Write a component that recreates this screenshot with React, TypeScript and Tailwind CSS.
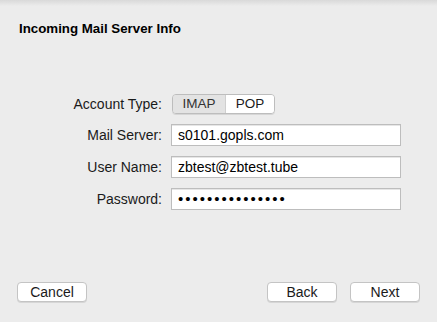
import React from "react";

const font = { fontFamily: '"Liberation Sans", Arial, sans-serif' };

function Field({ label, value, password }: { label: string; value: string; password?: boolean }) {
  return (
    <div className="flex items-center h-[22px]">
      <div className="w-[171px] pr-[9px] text-right text-[14px] text-[#1a1a1a]">{label}</div>
      <div className="w-[230px] h-[22px] bg-white border border-[#bdbdbd] shadow-[inset_0_1px_0_#e6e6e6] flex items-center pl-[6px] text-[14px] text-black">
        {password ? <span className="tracking-[2px] text-[15px]">{value}</span> : value}
      </div>
    </div>
  );
}

function Btn({ children }: { children: React.ReactNode }) {
  return (
    <div className="w-[70px] h-[20px] bg-white border border-[#c4c4c4] rounded-[4px] shadow-[0_1px_0_#d6d6d6] flex items-center justify-center text-[14px] text-[#1a1a1a]">
      {children}
    </div>
  );
}

export default function App() {
  return (
    <div style={font} className="w-[437px] h-[322px] bg-[#ececec] relative flex flex-col">
      <div className="absolute top-0 left-0 right-0 h-[6px] bg-gradient-to-b from-[#d9d9d9] to-[#ececec]" />
      <div className="pt-[21px] pl-[19px] text-[13.3px] font-bold text-black leading-[16px]">Incoming Mail Server Info</div>
      <div className="mt-[57px] flex flex-col gap-[10px]">
        <div className="flex items-center h-[20px]">
          <div className="w-[171px] pr-[9px] text-right text-[14px] text-[#1a1a1a]">Account Type:</div>
          <div className="ml-[1px] flex h-[20px] border border-[#bdbdbd] rounded-[4px] overflow-hidden text-[13.5px] text-[#1a1a1a] shadow-[0_1px_0_#d6d6d6]">
            <div className="w-[53px] bg-[#e3e3e3] flex items-center justify-center border-r border-[#cfcfcf] text-[#333]">IMAP</div>
            <div className="w-[48px] bg-white flex items-center justify-center">POP</div>
          </div>
        </div>
        <Field label="Mail Server:" value="s0101.gopls.com" />
        <Field label="User Name:" value="zbtest@zbtest.tube" />
        <Field label="Password:" value="•••••••••••••••" password />
      </div>
      <div className="mt-auto mb-[20px] flex items-center px-[17px]">
        <Btn>Cancel</Btn>
        <div className="ml-auto flex gap-[13px]">
          <Btn>Back</Btn>
          <Btn>Next</Btn>
        </div>
      </div>
    </div>
  );
}
